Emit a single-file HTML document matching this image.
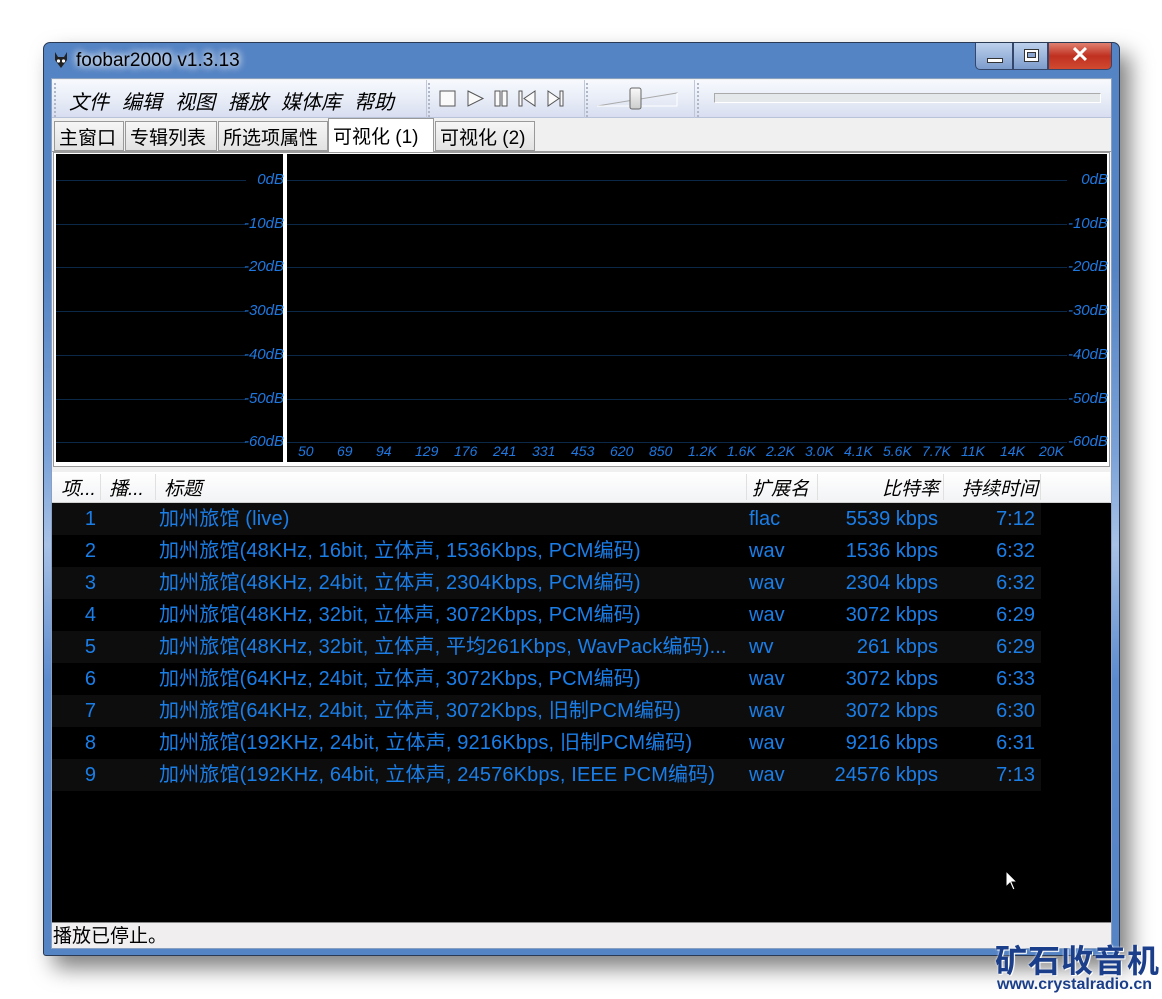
<!DOCTYPE html>
<html><head><meta charset="utf-8">
<style>
*{margin:0;padding:0;box-sizing:border-box}
body{width:1162px;height:999px;background:#fff;position:relative;overflow:hidden;font-family:"Liberation Sans","Noto Sans CJK SC",sans-serif}
.abs{position:absolute}
.shadow{left:43px;top:42px;width:1077px;height:914px;box-shadow:10px 12px 22px rgba(0,0,0,0.5);border-radius:7px}
.win{left:43px;top:42px;width:1077px;height:914px;background:linear-gradient(#5584c4,#5584c4 25%,#7aa2d8 45%,#a8c2e6 55%,#5b8ace 70%,#5584c4);border:1px solid #2a3a55;border-radius:7px 7px 3px 3px}
.title{left:76px;top:50px;font-size:19px;color:#000;text-shadow:0 0 8px #fff,0 0 8px #fff}
.client{left:51px;top:78px;width:1061px;height:871px;background:#f0f0f0;border:1px solid #8aa0c0}
.tb{top:80px;height:38px;background:linear-gradient(#f7f9fd,#e8edf7 50%,#d8def0);border-bottom:1px solid #b8c2d8}
.menu span{margin-right:13px}
.grip{border-left:2px dotted #b0b8c8}
.tab{top:121px;height:30px;font-size:19px;background:linear-gradient(#f6f6f6,#e2e2e2);border:1px solid #999;padding:1px 4px;white-space:nowrap}
.vis{background:#000}
.db{font-style:italic;font-size:15px;color:#1e78e0;text-align:right}
.ln{height:1px;background:#0c2848}
.fq{font-style:italic;font-size:14px;color:#1e78e0;top:443px}
.hdr{top:472px;left:52px;width:1058px;height:31px;background:linear-gradient(#fff,#f2f3f5);border-bottom:1px solid #d0d0d0;font-size:19px;font-style:italic}
.hdr div{position:absolute;top:2px;border-right:1px solid #e0e0e0;height:26px;white-space:nowrap}
.row{left:52px;width:989px;height:32px;font-size:20px;color:#1a7ee8}
.row div{position:absolute;top:0;line-height:32px;height:32px;white-space:nowrap}
.c1{left:0;width:44px;text-align:right}
.c2{left:107px;letter-spacing:0.15px}
.c3{left:697px}
.c4{left:760px;width:126px;text-align:right}
.c5{left:900px;width:83px;text-align:right}
.btn{top:43px;height:27px;border:1px solid #34476a;border-top:none}
</style></head><body>
<div class="abs shadow"></div>
<div class="abs win"></div>
<svg class="abs" style="left:53px;top:51px" width="16" height="18" viewBox="0 0 16 18"><path d="M2 1 L5 6 L11 6 L14 1 L14 9 L8 17 L2 9 Z" fill="#222"/><circle cx="5.5" cy="10" r="1.6" fill="#fff"/><circle cx="10.5" cy="10" r="1.6" fill="#fff"/></svg>
<div class="abs title">foobar2000 v1.3.13</div>
<div class="abs btn" style="left:975px;width:38px;background:linear-gradient(#bcd0ec,#7d9ccc);border-radius:0 0 0 5px"><div class="abs" style="left:11px;top:15px;width:16px;height:5px;background:#fff;border:1px solid #333"></div></div>
<div class="abs btn" style="left:1013px;width:35px;background:linear-gradient(#bcd0ec,#7d9ccc)"><div class="abs" style="left:10px;top:6px;width:15px;height:13px;border:1px solid #333;background:#fff"><div style="margin:2px 2px;height:6px;background:#8aa6d0;border:1px solid #333"></div></div></div>
<div class="abs btn" style="left:1048px;width:64px;background:linear-gradient(#e08070,#c03020 50%,#d04a30);border-radius:0 0 5px 0;color:#fff;font-size:22px;font-weight:bold;text-align:center;line-height:24px">✕</div>
<div class="abs client"></div>
<div class="abs tb" style="left:52px;width:1059px"></div>
<div class="abs grip" style="left:54px;top:83px;height:34px"></div>
<div class="abs menu" style="left:69px;top:86px;font-size:20px;font-style:italic"><span>文件</span><span>编辑</span><span>视图</span><span>播放</span><span>媒体库</span><span>帮助</span></div>
<div class="abs" style="left:426px;top:80px;width:1px;height:38px;background:#c0c8d8"></div>
<div class="abs grip" style="left:428px;top:83px;height:34px"></div>
<svg class="abs" style="left:438px;top:88px" width="130" height="22" viewBox="0 0 130 22" fill="#fafafa" stroke="#555"><rect x="2" y="3" width="15" height="15"/><path d="M30 3 L45 10.5 L30 18 Z"/><rect x="57" y="3" width="5" height="15"/><rect x="64" y="3" width="5" height="15"/><rect x="81" y="3" width="3" height="15"/><path d="M97 3 L86 10.5 L97 18 Z"/><path d="M110 3 L121 10.5 L110 18 Z"/><rect x="122" y="3" width="3" height="15"/></svg>
<div class="abs" style="left:584px;top:80px;width:1px;height:38px;background:#c0c8d8"></div>
<div class="abs grip" style="left:586px;top:83px;height:34px"></div>
<svg class="abs" style="left:595px;top:86px" width="86" height="26"><defs><linearGradient id="g" x1="0" y1="0" x2="0" y2="1"><stop offset="0" stop-color="#fafafa"/><stop offset="1" stop-color="#ccc"/></linearGradient></defs><path d="M2 20 L82 7 L82 20 Z" fill="none" stroke="#aaa"/><path d="M82 7 L82 20 L2 20" fill="none" stroke="#fff"/><rect x="35" y="2" width="11" height="21" rx="2" fill="url(#g)" stroke="#666"/></svg>
<div class="abs" style="left:694px;top:80px;width:1px;height:38px;background:#c0c8d8"></div>
<div class="abs grip" style="left:697px;top:83px;height:34px"></div>
<div class="abs" style="left:714px;top:93px;width:387px;height:10px;background:#e4e8ea;border:1px solid #aaa;border-right-color:#fff;border-bottom-color:#fff"></div>
<div class="abs" style="left:52px;top:151px;width:1059px;height:1px;background:#999"></div>
<div class="abs tab" style="left:54px;width:70px">主窗口</div>
<div class="abs tab" style="left:125px;width:92px">专辑列表</div>
<div class="abs tab" style="left:218px;width:110px">所选项属性</div>
<div class="abs tab" style="left:328px;top:118px;height:34px;width:106px;background:#fff;border-bottom:none;padding-top:3px">可视化 (1)</div>
<div class="abs tab" style="left:435px;width:100px">可视化 (2)</div>
<div class="abs" style="left:53px;top:152px;width:1057px;height:315px;background:#fff;border:1px solid #999"></div>
<div class="abs vis" style="left:56px;top:154px;width:227px;height:308px"></div>
<div class="abs vis" style="left:287px;top:154px;width:820px;height:308px"></div>
<div id="vl"></div>
<div class="abs hdr">
<div style="left:0;width:49px;padding-left:9px">项...</div>
<div style="left:49px;width:55px;padding-left:8px">播...</div>
<div style="left:104px;width:591px;padding-left:8px">标题</div>
<div style="left:695px;width:71px;padding-left:5px">扩展名</div>
<div style="left:766px;width:126px;text-align:right;padding-right:4px">比特率</div>
<div style="left:892px;width:97px;text-align:right;padding-right:2px">持续时间</div>
</div>
<div class="abs" style="left:52px;top:503px;width:1059px;height:420px;background:#000"></div>
<div id="rows"></div>
<div class="abs" style="left:52px;top:922px;width:1059px;height:1px;background:#888"></div>
<div class="abs" style="left:52px;top:923px;width:1059px;height:25px;background:#f0eeee;font-size:19px;padding-left:1px;line-height:27px">播放已停止。</div>
<svg class="abs" style="left:1005px;top:870px" width="14" height="22"><path d="M1 1 L1 17 L5 13 L8 20 L10 19 L7 12 L12 12 Z" fill="#fff" stroke="#000"/></svg>
<div class="abs" style="left:995px;top:936px;font-size:32px;font-weight:bold;color:#1a3e8a;letter-spacing:1px;text-shadow:0 0 2px #fff,1px 1px 0 #fff">矿石收音机</div>
<div class="abs" style="left:997px;top:976px;font-size:16px;font-weight:bold;color:#1a3e8a">www.crystalradio.cn</div>
<script>
var v='',db=['0dB','-10dB','-20dB','-30dB','-40dB','-50dB','-60dB'];
for(var i=0;i<7;i++){var y=180+i*43.7;
v+='<div class="abs ln" style="left:56px;top:'+y+'px;width:190px"></div>';
v+='<div class="abs ln" style="left:287px;top:'+y+'px;width:780px"></div>';
v+='<div class="abs db" style="left:190px;top:'+(y-9)+'px;width:94px">'+db[i]+'</div>';
v+='<div class="abs db" style="left:1010px;top:'+(y-9)+'px;width:98px">'+db[i]+'</div>';}
var f=['50','69','94','129','176','241','331','453','620','850','1.2K','1.6K','2.2K','3.0K','4.1K','5.6K','7.7K','11K','14K','20K'];
for(i=0;i<20;i++)v+='<div class="abs fq" style="left:'+(298+i*39)+'px">'+f[i]+'</div>';
document.getElementById('vl').innerHTML=v;
var r=[['1','加州旅馆 (live)','flac','5539 kbps','7:12'],
['2','加州旅馆(48KHz, 16bit, 立体声, 1536Kbps, PCM编码)','wav','1536 kbps','6:32'],
['3','加州旅馆(48KHz, 24bit, 立体声, 2304Kbps, PCM编码)','wav','2304 kbps','6:32'],
['4','加州旅馆(48KHz, 32bit, 立体声, 3072Kbps, PCM编码)','wav','3072 kbps','6:29'],
['5','加州旅馆(48KHz, 32bit, 立体声, 平均261Kbps, WavPack编码)...','wv','261 kbps','6:29'],
['6','加州旅馆(64KHz, 24bit, 立体声, 3072Kbps, PCM编码)','wav','3072 kbps','6:33'],
['7','加州旅馆(64KHz, 24bit, 立体声, 3072Kbps, 旧制PCM编码)','wav','3072 kbps','6:30'],
['8','加州旅馆(192KHz, 24bit, 立体声, 9216Kbps, 旧制PCM编码)','wav','9216 kbps','6:31'],
['9','加州旅馆(192KHz, 64bit, 立体声, 24576Kbps, IEEE PCM编码)','wav','24576 kbps','7:13']];
var h='';
for(i=0;i<9;i++){h+='<div class="abs row" style="top:'+(503+i*32)+'px;background:'+(i%2==0?'#0d0d0d':'#000')+'"><div class="c1">'+r[i][0]+'</div><div class="c2">'+r[i][1]+'</div><div class="c3">'+r[i][2]+'</div><div class="c4">'+r[i][3]+'</div><div class="c5">'+r[i][4]+'</div></div>';}
document.getElementById('rows').innerHTML=h;
</script>
</body></html>
